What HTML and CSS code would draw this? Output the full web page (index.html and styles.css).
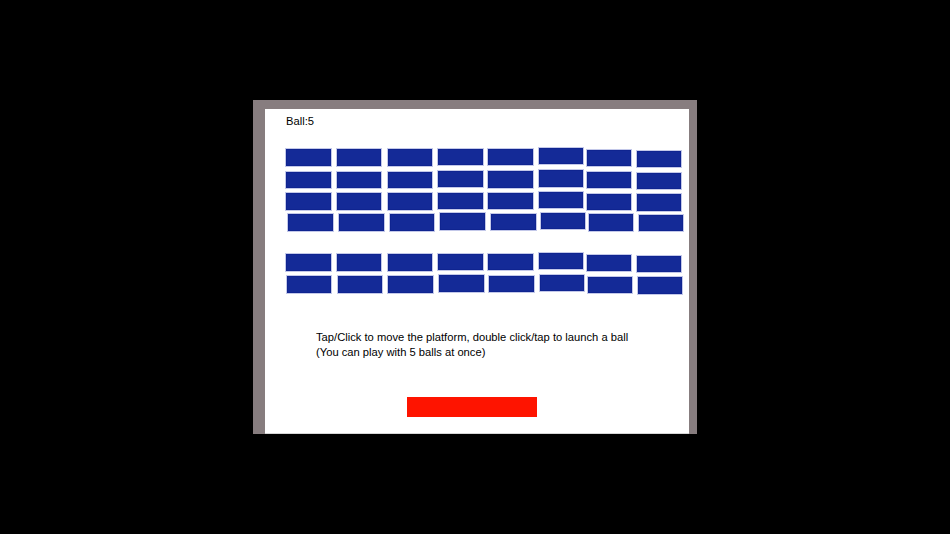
FILE: index.html
```html
<!DOCTYPE html>
<html>
<head>
<meta charset="utf-8">
<link rel="stylesheet" href="styles.css">
</head>
<body>
<div class="frame">
  <div class="canvas">
    <div class="bricks">
      <div class="brick" style="left:20px;top:39.3px"></div>
      <div class="brick" style="left:70.7px;top:39.3px"></div>
      <div class="brick" style="left:121.7px;top:39.3px"></div>
      <div class="brick" style="left:172.3px;top:38.7px"></div>
      <div class="brick" style="left:222.3px;top:39px"></div>
      <div class="brick" style="left:272.7px;top:38px"></div>
      <div class="brick" style="left:320.7px;top:39.7px"></div>
      <div class="brick" style="left:370.7px;top:40.7px"></div>

      <div class="brick" style="left:20px;top:62px"></div>
      <div class="brick" style="left:70.7px;top:62px"></div>
      <div class="brick" style="left:121.7px;top:62px"></div>
      <div class="brick" style="left:172.3px;top:61px"></div>
      <div class="brick" style="left:222.3px;top:61.3px"></div>
      <div class="brick" style="left:272.7px;top:60.3px"></div>
      <div class="brick" style="left:320.7px;top:62px"></div>
      <div class="brick" style="left:370.7px;top:62.7px"></div>

      <div class="brick" style="left:20px;top:83.3px"></div>
      <div class="brick" style="left:70.7px;top:83.3px"></div>
      <div class="brick" style="left:121.7px;top:83.3px"></div>
      <div class="brick" style="left:172.3px;top:82.7px"></div>
      <div class="brick" style="left:222.3px;top:82.7px"></div>
      <div class="brick" style="left:272.7px;top:81.7px"></div>
      <div class="brick" style="left:320.7px;top:83.7px"></div>
      <div class="brick" style="left:370.7px;top:84.3px"></div>

      <div class="brick" style="left:22.3px;top:104.3px"></div>
      <div class="brick" style="left:73px;top:104.3px"></div>
      <div class="brick" style="left:123.7px;top:104.3px"></div>
      <div class="brick" style="left:174.3px;top:103.3px"></div>
      <div class="brick" style="left:225px;top:103.7px"></div>
      <div class="brick" style="left:274.7px;top:102.7px"></div>
      <div class="brick" style="left:322.7px;top:104.3px"></div>
      <div class="brick" style="left:372.7px;top:105px"></div>

      <div class="brick" style="left:20px;top:144.3px"></div>
      <div class="brick" style="left:70.7px;top:144.3px"></div>
      <div class="brick" style="left:121.7px;top:144.3px"></div>
      <div class="brick" style="left:172.3px;top:143.7px"></div>
      <div class="brick" style="left:222.3px;top:144px"></div>
      <div class="brick" style="left:272.7px;top:143px"></div>
      <div class="brick" style="left:320.7px;top:144.7px"></div>
      <div class="brick" style="left:370.7px;top:145.7px"></div>

      <div class="brick" style="left:20.7px;top:166.3px"></div>
      <div class="brick" style="left:71.7px;top:166.3px"></div>
      <div class="brick" style="left:122.3px;top:166.3px"></div>
      <div class="brick" style="left:173px;top:165.3px"></div>
      <div class="brick" style="left:223px;top:166px"></div>
      <div class="brick" style="left:273.7px;top:165px"></div>
      <div class="brick" style="left:321.7px;top:166.7px"></div>
      <div class="brick" style="left:371.7px;top:167.3px"></div>
    </div>
    <div class="ball-label">Ball:5</div>
    <div class="help">
      <div>Tap/Click to move the platform, double click/tap to launch a ball</div>
      <div>(You can play with 5 balls at once)</div>
    </div>
    <div class="paddle"></div>
  </div>
</div>
</body>
</html>
```

FILE: styles.css
```css
html, body {
  margin: 0;
  padding: 0;
  background: #000;
}
body {
  height: 100vh;
  display: flex;
  align-items: center;
  justify-content: center;
  font-family: "Liberation Sans", Arial, sans-serif;
}
.frame {
  width: 444px;
  height: 334px;
  box-sizing: border-box;
  padding: 9px 8.5px 0 12px;
  background: #877d7f;
  display: flex;
}
.canvas {
  flex: 1;
  background: #fff;
  position: relative;
  display: flex;
  flex-direction: column;
  border-bottom: 1px solid #d6d6d6;
}
.bricks {
  position: absolute;
  inset: 0;
}
.brick {
  position: absolute;
  width: 46.7px;
  height: 18.4px;
  box-sizing: border-box;
  background: #142a97;
  border: 1px solid #c3c8e9;
  box-shadow: inset 0 0 0 1px #0f2490;
}
.ball-label {
  margin: 4.8px 0 0 21px;
  font-size: 11.2px;
  line-height: 14px;
  color: #000;
}
.help {
  margin: 202.5px 0 0 51px;
  font-size: 11.2px;
  line-height: 14.5px;
  color: #000;
}
.paddle {
  margin: 38px 0 0 142px;
  width: 130px;
  height: 19.5px;
  background: #fe1400;
}
```
